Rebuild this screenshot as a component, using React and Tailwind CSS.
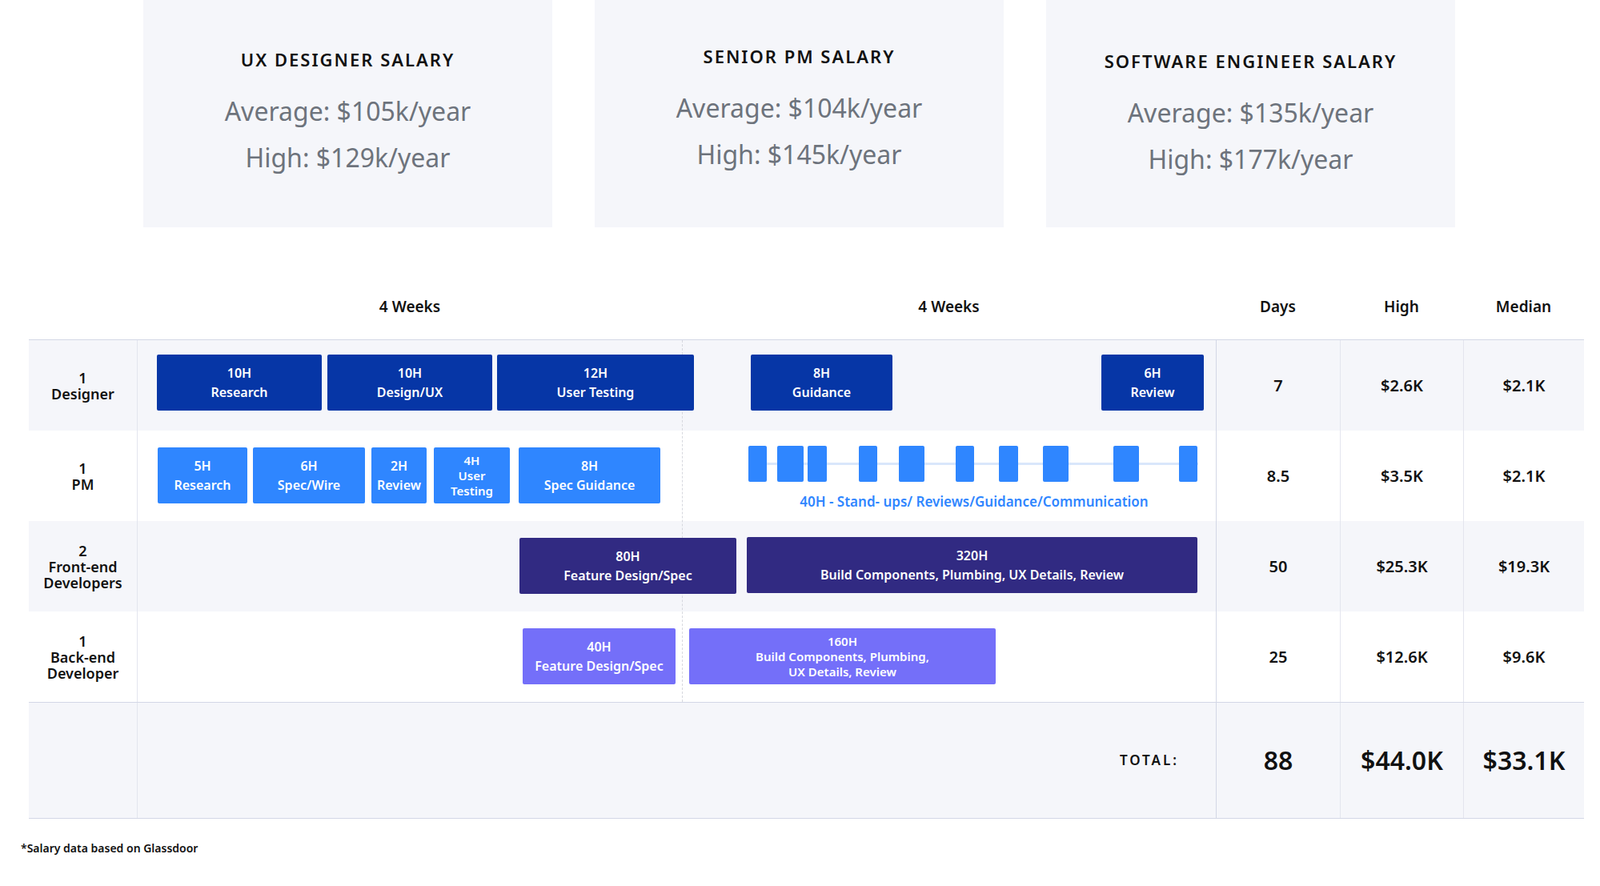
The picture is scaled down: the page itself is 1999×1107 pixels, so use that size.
const cards = [
  { title: "UX DESIGNER SALARY", avg: "$105k/year", high: "$129k/year", pt: "pt-[58px]" },
  { title: "SENIOR PM SALARY", avg: "$104k/year", high: "$145k/year", pt: "pt-[54px]" },
  { title: "SOFTWARE ENGINEER SALARY", avg: "$135k/year", high: "$177k/year", pt: "pt-[60px]" },
];

const DB = "bg-[#0636a6]";
const LB = "bg-[#2f86ff]";
const DP = "bg-[#312a82]";
const LP = "bg-[#746ff9]";

// bar positions relative to the gantt cell (left edge at x=172)
const rows = [
  {
    label: ["1", "Designer"], bg: "bg-[#f5f6fa]", days: "7", high: "$2.6K", median: "$2.1K",
    bars: [
      { l: 24, w: 206, t: 18, h: 70, c: DB, text: ["10H", "Research"] },
      { l: 237, w: 206, t: 18, h: 70, c: DB, text: ["10H", "Design/UX"] },
      { l: 449, w: 246, t: 18, h: 70, c: DB, text: ["12H", "User Testing"] },
      { l: 766, w: 177, t: 18, h: 70, c: DB, text: ["8H", "Guidance"] },
      { l: 1204, w: 128, t: 18, h: 70, c: DB, text: ["6H", "Review"] },
    ],
  },
  {
    label: ["1", "PM"], bg: "bg-white", days: "8.5", high: "$3.5K", median: "$2.1K", pm: true,
    bars: [
      { l: 25, w: 112, t: 21, h: 70, c: LB, text: ["5H", "Research"] },
      { l: 144, w: 140, t: 21, h: 70, c: LB, text: ["6H", "Spec/Wire"] },
      { l: 292, w: 69, t: 21, h: 70, c: LB, text: ["2H", "Review"] },
      { l: 370, w: 95, t: 21, h: 70, c: LB, text: ["4H", "User", "Testing"], tight: true },
      { l: 476, w: 177, t: 21, h: 70, c: LB, text: ["8H", "Spec Guidance"] },
    ],
  },
  {
    label: ["2", "Front-end", "Developers"], bg: "bg-[#f5f6fa]", days: "50", high: "$25.3K", median: "$19.3K",
    bars: [
      { l: 477, w: 271, t: 21, h: 70, c: DP, text: ["80H", "Feature Design/Spec"] },
      { l: 761, w: 563, t: 20, h: 70, c: DP, text: ["320H", "Build Components, Plumbing, UX Details, Review"] },
    ],
  },
  {
    label: ["1", "Back-end", "Developer"], bg: "bg-white", days: "25", high: "$12.6K", median: "$9.6K",
    bars: [
      { l: 481, w: 191, t: 21, h: 70, c: LP, text: ["40H", "Feature Design/Spec"] },
      { l: 689, w: 383, t: 21, h: 70, c: LP, text: ["160H", "Build Components, Plumbing,", "UX Details, Review"], tight: true },
    ],
  },
];

const squares = [[763, 23], [799, 33], [837, 24], [901, 23], [951, 32], [1022, 23], [1076, 24], [1131, 32], [1219, 32], [1301, 23]];

function Bar({ b }) {
  return (
    <div
      className={`absolute z-10 ${b.c} rounded-[2px] flex flex-col items-center justify-center text-white font-semibold text-center ${b.tight ? "text-[15px] leading-[19px]" : "text-[16px] leading-[24px]"}`}
      style={{ left: b.l, width: b.w, top: b.t, height: b.h }}
    >
      {b.text.map((t, i) => <div key={i}>{t}</div>)}
    </div>
  );
}

export default function App() {
  return (
    <div className="w-[1999px] h-[1107px] bg-white text-[#111] font-['Lato','Noto_Sans',sans-serif] relative">
      {/* Salary cards */}
      <div className="flex pl-[179px] gap-[53px]">
        {cards.map((c) => (
          <div key={c.title} className={`w-[511px] h-[284px] bg-[#f5f6fa] ${c.pt} flex flex-col items-center`}>
            <div className="text-[22px] font-semibold tracking-[2px] text-[#111]">{c.title}</div>
            <div className="mt-[28px] text-[32px] text-[#6d737c] leading-[40px]">Average: {c.avg}</div>
            <div className="mt-[18px] text-[32px] text-[#6d737c] leading-[40px]">High: {c.high}</div>
          </div>
        ))}
      </div>

      {/* Table */}
      <div className="ml-[36px] w-[1943px] mt-[85px]">
        <div className="flex h-[55px] text-[19px] font-semibold">
          <div className="w-[136px]" />
          <div className="w-[1347px] flex">
            <div className="w-[680px] text-center">4 Weeks</div>
            <div className="w-[667px] text-center">4 Weeks</div>
          </div>
          <div className="w-[155px] text-center">Days</div>
          <div className="w-[154px] text-center">High</div>
          <div className="w-[151px] text-center">Median</div>
        </div>

        <div className="border-t border-[#d3d7e6] relative">
          {rows.map((r) => (
            <div key={r.label.join()} className={`flex h-[113px] ${r.bg}`}>
              <div className="w-[136px] shrink-0 border-r border-[#e3e5ee] flex flex-col items-center justify-center text-[18px] font-semibold leading-[20px] text-center">
                {r.label.map((t) => <div key={t}>{t}</div>)}
              </div>
              <div className="w-[1347px] shrink-0 relative">
                {r.pm && (
                  <>
                    <div className="absolute z-10 left-[770px] w-[555px] top-[40px] h-[3px] bg-[#d9e7fb]" />
                    {squares.map(([l, w]) => (
                      <div key={l} className={`absolute z-10 ${LB} rounded-[2px] top-[19px] h-[45px]`} style={{ left: l, width: w }} />
                    ))}
                    <div className="absolute z-10 left-[765px] w-[560px] top-[76px] text-center text-[17px] font-semibold text-[#2f86ff]">
                      40H - Stand- ups/ Reviews/Guidance/Communication
                    </div>
                  </>
                )}
                {r.bars.map((b) => <Bar key={b.l} b={b} />)}
              </div>
              <div className="w-[155px] shrink-0 border-l border-[#d3d7e6] flex items-center justify-center text-[20px] font-semibold">{r.days}</div>
              <div className="w-[154px] shrink-0 border-l border-[#e3e5ee] flex items-center justify-center text-[20px] font-semibold">{r.high}</div>
              <div className="w-[151px] shrink-0 border-l border-[#e3e5ee] flex items-center justify-center text-[20px] font-semibold">{r.median}</div>
            </div>
          ))}
          {/* dashed week divider */}
          <div className="absolute left-[816px] top-0 h-full border-l border-dashed border-[#d6d8de]" />
        </div>

        <div className="flex h-[146px] bg-[#f5f6fa] border-t border-b border-[#d3d7e6]">
          <div className="w-[136px] shrink-0 border-r border-[#e3e5ee]" />
          <div className="w-[1347px] shrink-0 flex items-center justify-end pr-[46px] text-[17px] font-semibold tracking-[3px]">TOTAL:</div>
          <div className="w-[155px] shrink-0 border-l border-[#d3d7e6] flex items-center justify-center text-[32px] font-semibold">88</div>
          <div className="w-[154px] shrink-0 border-l border-[#e3e5ee] flex items-center justify-center text-[32px] font-semibold">$44.0K</div>
          <div className="w-[151px] shrink-0 border-l border-[#e3e5ee] flex items-center justify-center text-[32px] font-semibold">$33.1K</div>
        </div>

        <div className="mt-[26px] -ml-[10px] text-[14px] font-semibold">*Salary data based on Glassdoor</div>
      </div>
    </div>
  );
}
